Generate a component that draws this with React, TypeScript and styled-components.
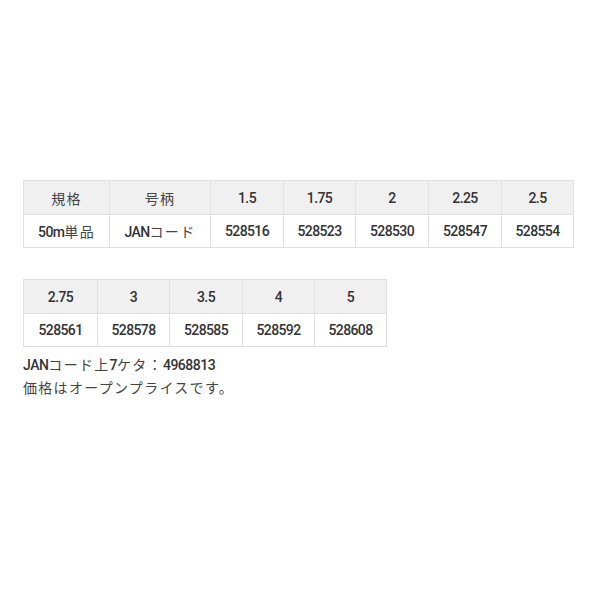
import React from "react";
import styled, { createGlobalStyle } from "styled-components";

const Global = createGlobalStyle`
  html, body { margin: 0; padding: 0; background: #fff; }
  body { font-family: Roboto, "Noto Sans CJK JP", sans-serif; color: #333; }
`;

const Page = styled.div`
  padding: 180px 0 0 23px;
  display: flex;
  flex-direction: column;
  align-items: flex-start;
`;

const Table = styled.table<{ $mb?: number }>`
  border-collapse: collapse;
  table-layout: fixed;
  margin-bottom: ${(p) => p.$mb ?? 0}px;
  font-size: 14px;
  letter-spacing: -0.6px;
`;

const HeadCell = styled.th`
  background: #f0f0f0;
  border: 1px solid #e0e0e0;
  height: 33px;
  padding: 0;
  text-align: center;
  font-weight: 500;
  color: #333;
`;

const Cell = styled.td`
  background: #fff;
  border: 1px solid #e0e0e0;
  height: 32px;
  padding: 0;
  text-align: center;
  font-weight: 500;
  color: #333;
`;

const Jp = styled.span`
  font-family: "Noto Sans CJK JP", sans-serif;
  font-size: 14px;
  letter-spacing: 1.3px;
  font-weight: 400;
  color: #444;
`;

const Notes = styled.div`
  margin-top: 6px;
  font-size: 14px;
  line-height: 22px;
  letter-spacing: -0.5px;
  color: #333;
`;

const Line = styled.div``;

const Strong = styled.span`
  font-weight: 500;
`;

const row1Heads = ["1.5", "1.75", "2", "2.25", "2.5"];
const row1Codes = ["528516", "528523", "528530", "528547", "528554"];
const widths1 = [86, 101, 73, 72, 73, 73, 72];

const row2Heads = ["2.75", "3", "3.5", "4", "5"];
const row2Codes = ["528561", "528578", "528585", "528592", "528608"];
const widths2 = [74, 72, 73, 72, 72];

export default function App() {
  return (
    <>
      <Global />
      <Page>
        <Table $mb={31}>
          <colgroup>
            {widths1.map((w, i) => (
              <col key={i} style={{ width: w }} />
            ))}
          </colgroup>
          <thead>
            <tr>
              <HeadCell><Jp>規格</Jp></HeadCell>
              <HeadCell><Jp>号柄</Jp></HeadCell>
              {row1Heads.map((h) => (
                <HeadCell key={h}>{h}</HeadCell>
              ))}
            </tr>
          </thead>
          <tbody>
            <tr>
              <Cell>50m<Jp>単品</Jp></Cell>
              <Cell>JAN<Jp>コード</Jp></Cell>
              {row1Codes.map((c) => (
                <Cell key={c}>{c}</Cell>
              ))}
            </tr>
          </tbody>
        </Table>
        <Table>
          <colgroup>
            {widths2.map((w, i) => (
              <col key={i} style={{ width: w }} />
            ))}
          </colgroup>
          <thead>
            <tr>
              {row2Heads.map((h) => (
                <HeadCell key={h}>{h}</HeadCell>
              ))}
            </tr>
          </thead>
          <tbody>
            <tr>
              {row2Codes.map((c) => (
                <Cell key={c}>{c}</Cell>
              ))}
            </tr>
          </tbody>
        </Table>
        <Notes>
          <Line>
            <Strong>JAN</Strong><Jp>コード上</Jp><Strong>7</Strong><Jp>ケタ：</Jp><Strong>4968813</Strong>
          </Line>
          <Line>
            <Jp>価格はオープンプライスです。</Jp>
          </Line>
        </Notes>
      </Page>
    </>
  );
}
